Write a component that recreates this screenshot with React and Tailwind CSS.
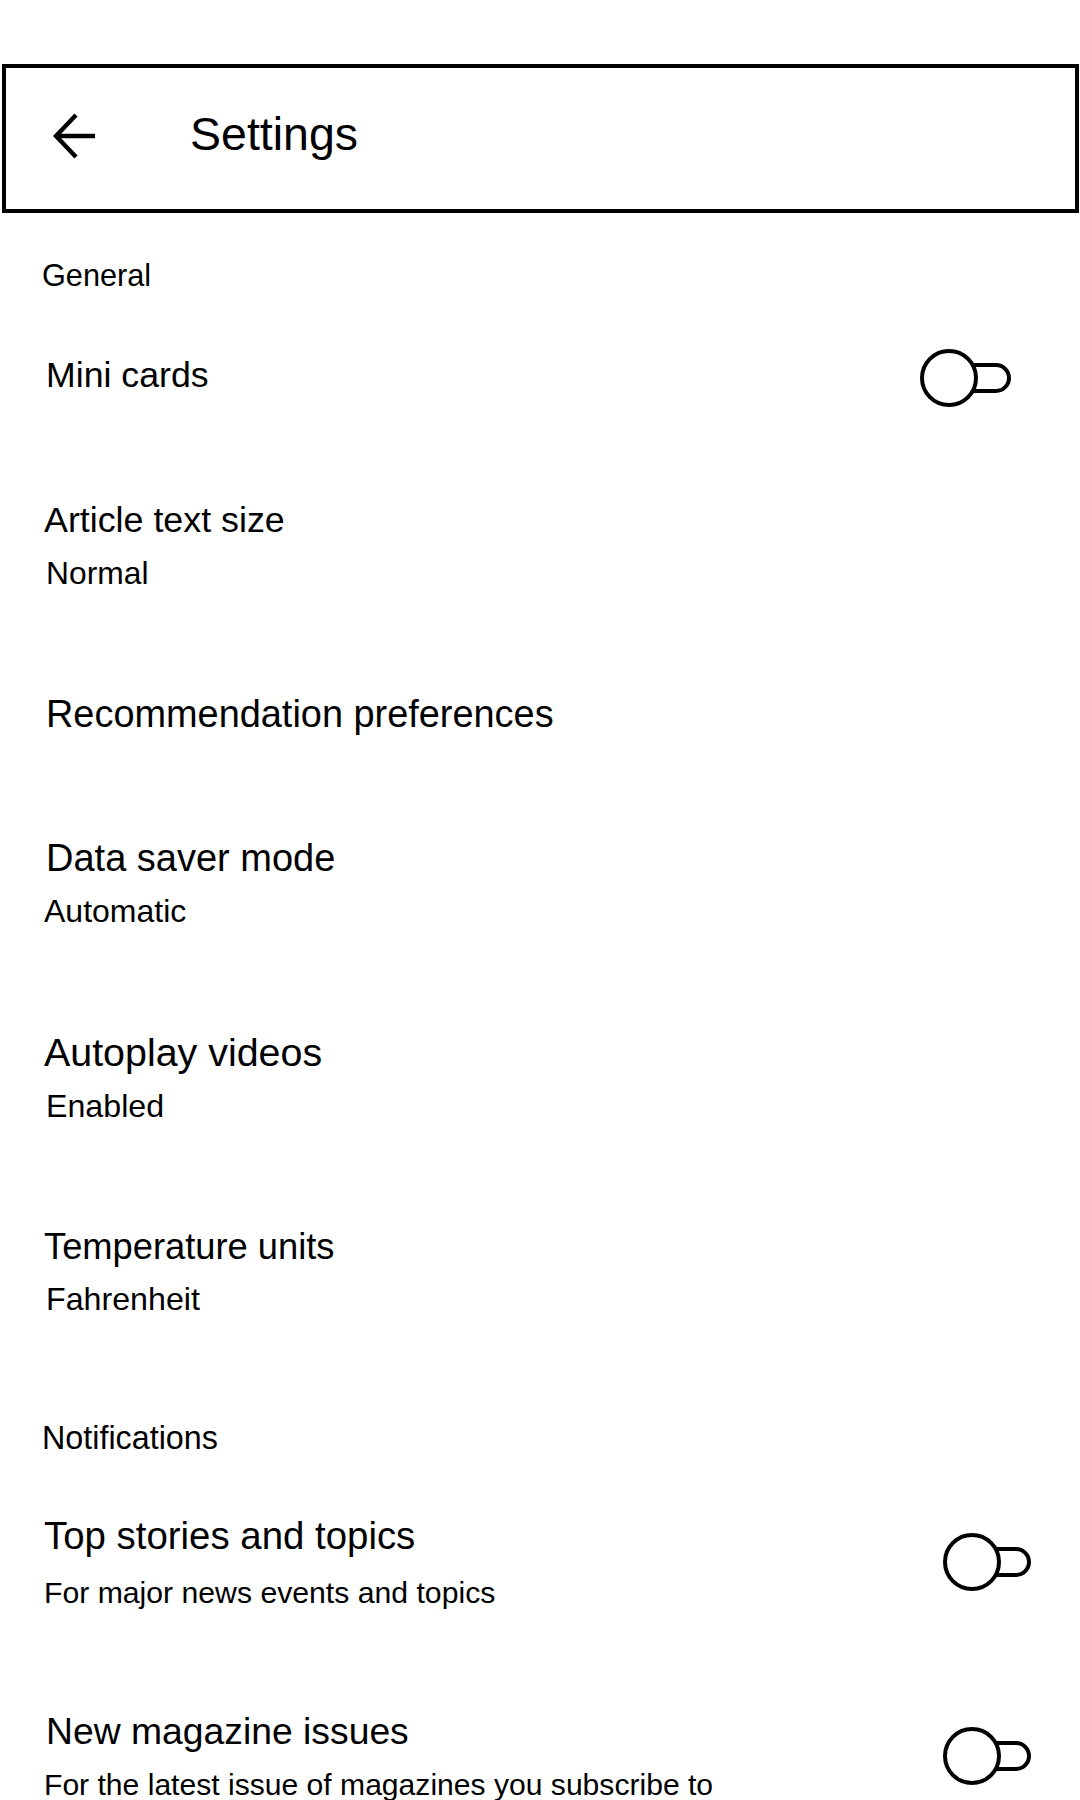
import React from 'react';

function BackArrow() {
  return (
    <svg width="44" height="46" viewBox="0 0 44 46" fill="none" stroke="black" strokeWidth="4.5" strokeLinejoin="miter">
      <path d="M42 23H4" />
      <path d="M23 2L3 23L23 44" />
    </svg>
  );
}

// outline toggle, off state: knob circle with a rounded track stub on the right
function Toggle({ end = 77 }) {
  return (
    <svg width="96" height="64" viewBox="0 0 96 64" fill="none" stroke="black" strokeWidth="4">
      <circle cx="31" cy="32" r="27" />
      <path d={`M54 19H${end}A13 13 0 0 1 ${end} 45H54`} />
    </svg>
  );
}

export default function App() {
  return (
    <div className="w-[1080px] h-[1800px] overflow-hidden bg-white text-black font-['Liberation_Sans',Arial,sans-serif]">
      {/* Top bar */}
      <div className="mt-[64px] ml-[2px] w-[1077px] h-[149px] border-4 border-black flex items-start">
        <div className="ml-[47px] mt-[45px]">
          <BackArrow />
        </div>
        <h1 className="ml-[93px] mt-[44px] text-[46.5px] leading-[44px] font-normal">Settings</h1>
      </div>

      {/* General */}
      <div className="mt-[48px] pl-[42px] text-[30.7px] leading-[30px]">General</div>

      <div className="mt-[55px] flex items-start justify-between pl-[46px] pr-[66px]">
        <div className="mt-[11px] text-[35.7px] leading-[36px]">Mini cards</div>
        <Toggle end={78} />
      </div>

      <div className="mt-[92px]">
        <div className="pl-[44px] text-[35.8px] leading-[36px]">Article text size</div>
        <div className="pl-[46px] mt-[20px] text-[31.8px] leading-[30px]">Normal</div>
      </div>

      <div className="mt-[108px] pl-[46px] text-[37.9px] leading-[36px]">Recommendation preferences</div>

      <div className="mt-[108px]">
        <div className="pl-[46px] text-[38px] leading-[36px]">Data saver mode</div>
        <div className="pl-[44px] mt-[20px] text-[32px] leading-[30px]">Automatic</div>
      </div>

      <div className="mt-[108px]">
        <div className="pl-[44px] text-[39.4px] leading-[36px]">Autoplay videos</div>
        <div className="pl-[46px] mt-[21px] text-[32.2px] leading-[30px]">Enabled</div>
      </div>

      <div className="mt-[108px]">
        <div className="pl-[44px] text-[36.3px] leading-[36px]">Temperature units</div>
        <div className="pl-[46px] mt-[19px] text-[32.2px] leading-[30px]">Fahrenheit</div>
      </div>

      {/* Notifications */}
      <div className="mt-[109px] pl-[42px] text-[32.3px] leading-[30px]">Notifications</div>

      <div className="mt-[65px] flex items-start justify-between pl-[44px] pr-[43px]">
        <div>
          <div className="text-[38.4px] leading-[36px]">Top stories and topics</div>
          <div className="mt-[24px] text-[30.2px] leading-[30px]">For major news events and topics</div>
        </div>
        <div className="mt-[12px]">
          <Toggle end={75} />
        </div>
      </div>

      <div className="mt-[105px] flex items-start justify-between pl-[44px] pr-[43px]">
        <div>
          <div className="pl-[2px] text-[37.3px] leading-[36px]">New magazine issues</div>
          <div className="mt-[21px] text-[30.1px] leading-[30px]">For the latest issue of magazines you subscribe to</div>
        </div>
        <div className="mt-[11px]">
          <Toggle end={75} />
        </div>
      </div>
    </div>
  );
}
